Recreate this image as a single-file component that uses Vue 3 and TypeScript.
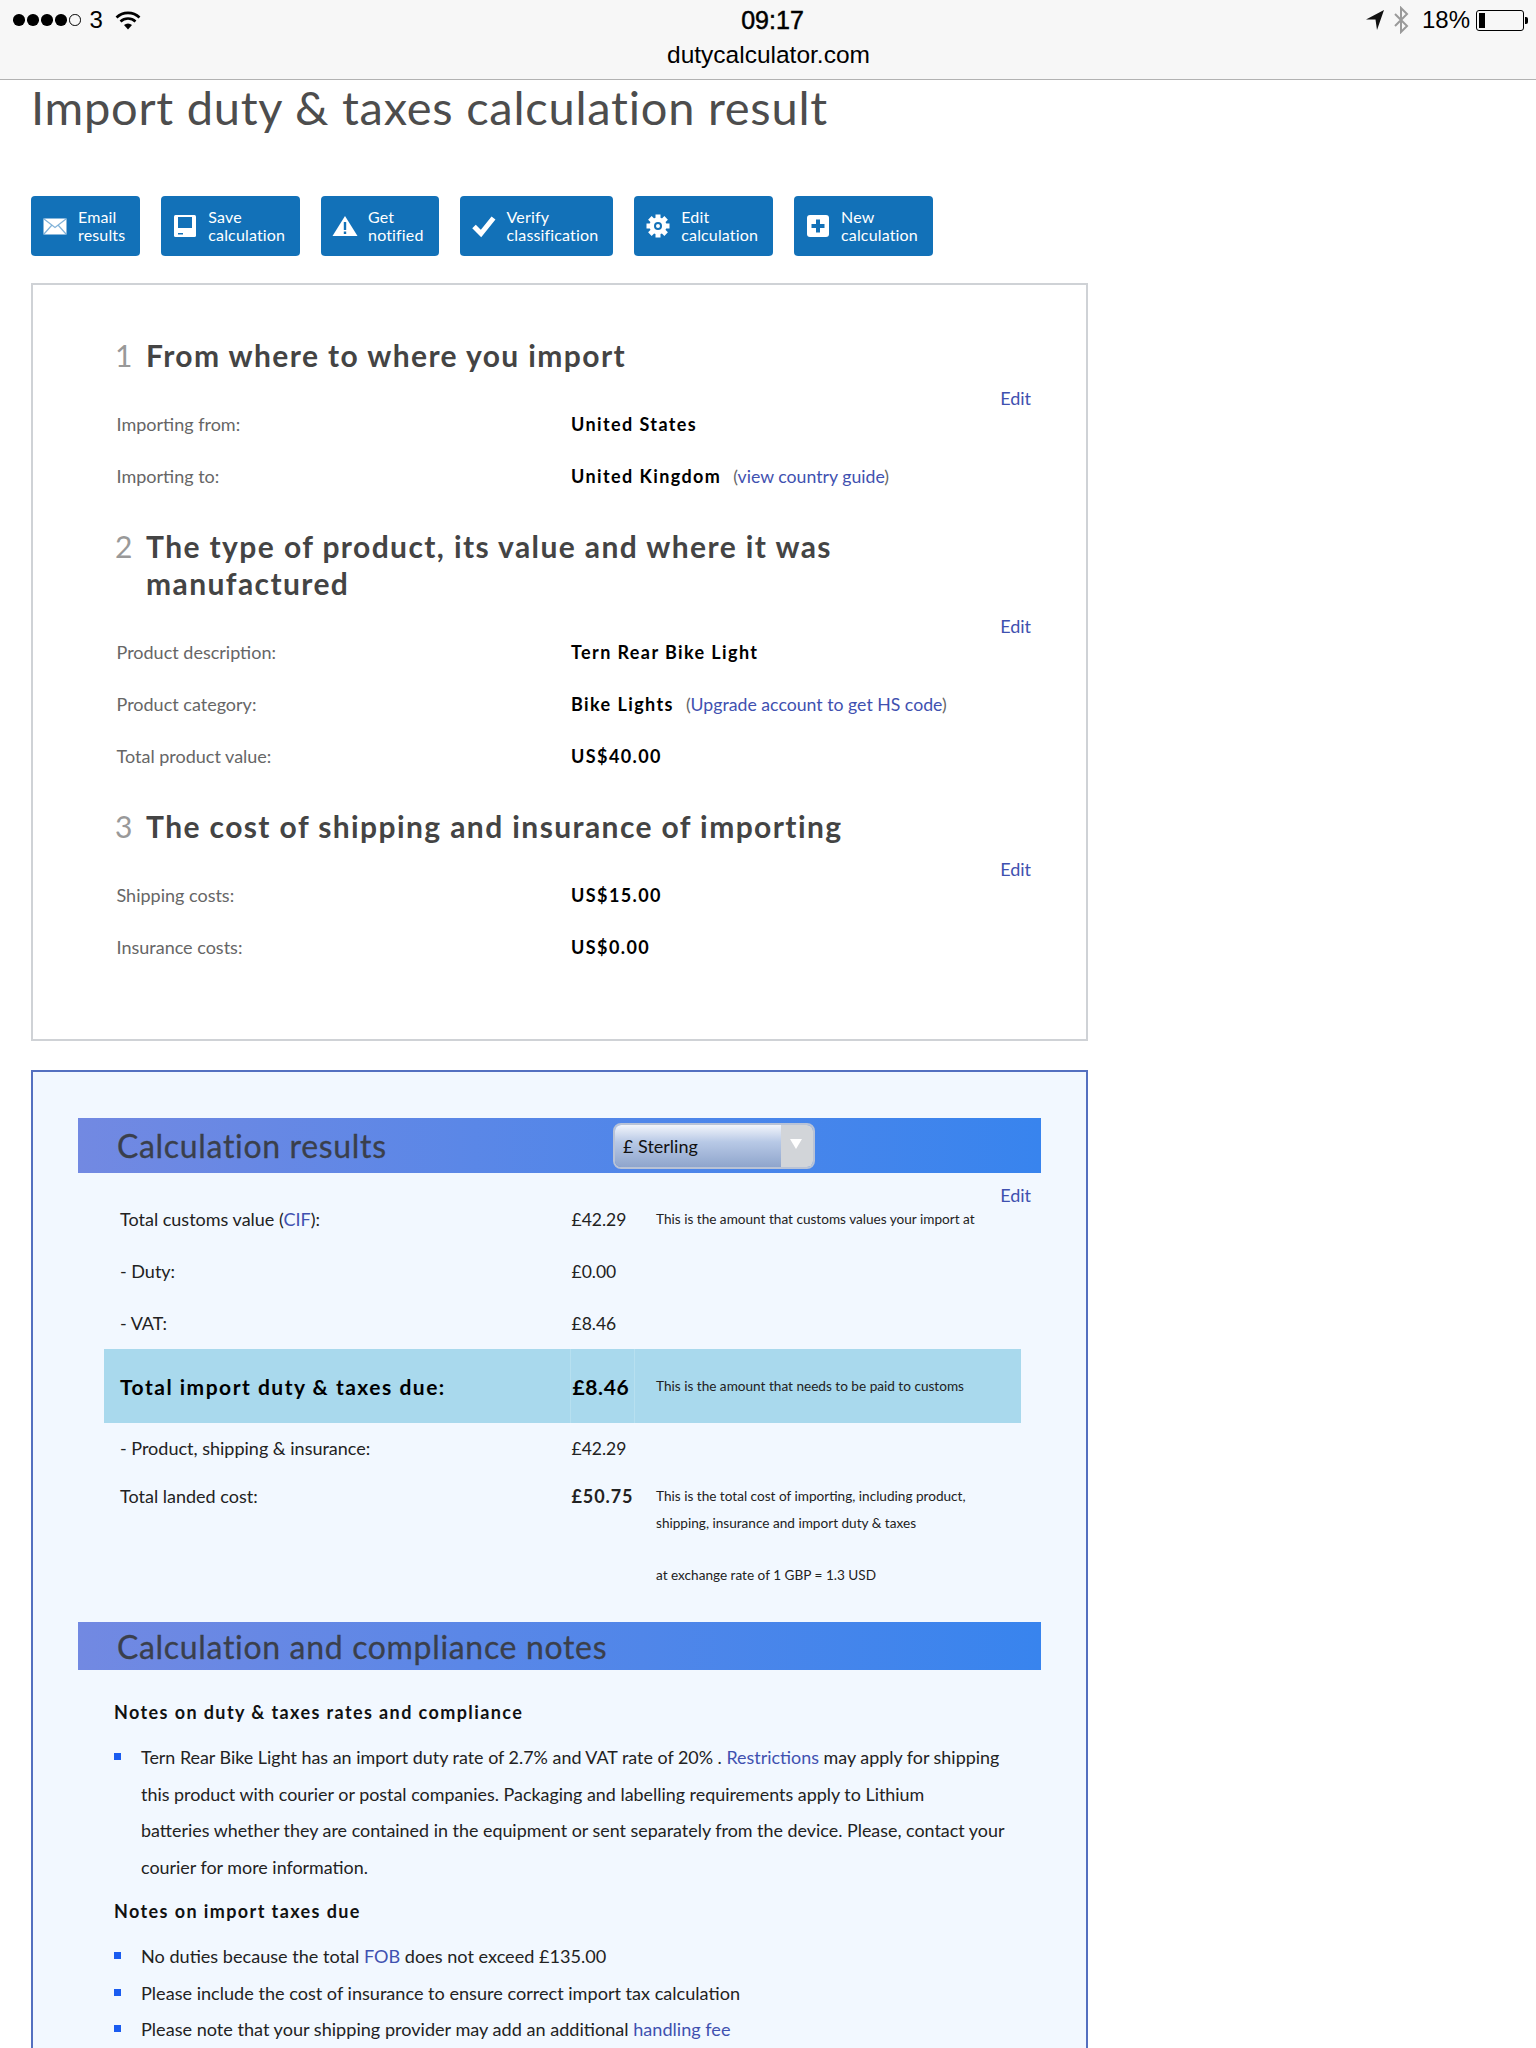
<script setup lang="ts">
type Row = { label: string; value: string; link?: string };
type Section = { num: number; title: string; rows: Row[] };

const actions = [
  { id: 'mail', top: 'Email', bottom: 'results' },
  { id: 'save', top: 'Save', bottom: 'calculation' },
  { id: 'warn', top: 'Get', bottom: 'notified' },
  { id: 'check', top: 'Verify', bottom: 'classification' },
  { id: 'gear', top: 'Edit', bottom: 'calculation' },
  { id: 'plus', top: 'New', bottom: 'calculation' },
];

const sections: Section[] = [
  {
    num: 1,
    title: 'From where to where you import',
    rows: [
      { label: 'Importing from:', value: 'United States' },
      { label: 'Importing to:', value: 'United Kingdom', link: 'view country guide' },
    ],
  },
  {
    num: 2,
    title: 'The type of product, its value and where it was manufactured',
    rows: [
      { label: 'Product description:', value: 'Tern Rear Bike Light' },
      { label: 'Product category:', value: 'Bike Lights', link: 'Upgrade account to get HS code' },
      { label: 'Total product value:', value: 'US$40.00' },
    ],
  },
  {
    num: 3,
    title: 'The cost of shipping and insurance of importing',
    rows: [
      { label: 'Shipping costs:', value: 'US$15.00' },
      { label: 'Insurance costs:', value: 'US$0.00' },
    ],
  },
];
</script>

<template>
  <div class="page">
    <header class="status">
      <div class="status-left">
        <span class="signal">
          <i v-for="n in 4" :key="n"></i>
          <i class="off"></i>
        </span>
        <span class="carrier">3</span>
        <svg width="26" height="20" viewBox="0 0 26 20" aria-hidden="true">
          <path d="M1.500 7.500a16.500 16.500 0 0 1 23 0" fill="none" stroke="#000" stroke-width="2.600" />
          <path d="M5.500 11.500a11 11 0 0 1 15 0" fill="none" stroke="#000" stroke-width="2.600" />
          <path d="M9 15a6 6 0 0 1 8 0L13 19.500z" fill="#000" />
        </svg>
      </div>
      <div class="status-center">
        <strong>09:17</strong>
        <span>dutycalculator.com</span>
      </div>
      <div class="status-right">
        <svg width="20" height="22" viewBox="0 0 20 22" aria-hidden="true">
          <path d="M19 1 L1 10.500 L10.500 10.500 L12 21z" fill="#111" />
        </svg>
        <svg width="16" height="28" viewBox="0 0 16 28" aria-hidden="true">
          <path d="M2 8l12 12-6 6V2l6 6L2 20" fill="none" stroke="#9a9a9a" stroke-width="2" />
        </svg>
        <span class="pct">18%</span>
        <span class="battery"><i></i></span>
      </div>
    </header>

    <main class="content">
      <h1>Import duty &amp; taxes calculation result</h1>

      <nav class="actions">
        <a v-for="a in actions" :key="a.id" class="action">
          <svg class="action-icon" width="26" height="26" viewBox="0 0 26 26" aria-hidden="true">
            <template v-if="a.id === 'mail'">
              <path d="M1.500 5.500h23v16h-23z" fill="#fff" />
              <path d="M2 6l11 8.500L24 6M2 21l8-9M24 21l-8-9" fill="none" stroke="#1a73b8" stroke-width="1.200" opacity=".55" />
            </template>
            <template v-else-if="a.id === 'save'">
              <path d="M3.500 2h19A1.500 1.500 0 0 1 24 3.500v19a1.500 1.500 0 0 1-1.500 1.500h-19A1.500 1.500 0 0 1 2 22.500v-19A1.500 1.500 0 0 1 3.500 2z" fill="#fff" />
              <path d="M6 4h14v11H6z" fill="#1271b8" />
              <path d="M6 20h5v1.500H6z" fill="#1271b8" />
            </template>
            <template v-else-if="a.id === 'warn'">
              <path d="M13 3L25.500 23H.500z" fill="#fff" />
              <path d="M11.800 9h2.400v8h-2.400zM11.800 18.500h2.400V21h-2.400z" fill="#1271b8" />
            </template>
            <template v-else-if="a.id === 'check'">
              <path d="M3 13.500l7 7L22.500 5" fill="none" stroke="#fff" stroke-width="5" />
            </template>
            <template v-else-if="a.id === 'gear'">
              <g fill="#fff">
                <circle cx="13" cy="13" r="8.500" />
                <rect v-for="r in [0, 45, 90, 135]" :key="r" x="10.500" y="1.500" width="5" height="23" :transform="`rotate(${r} 13 13)`" />
              </g>
              <circle cx="13" cy="13" r="4" fill="#1271b8" />
              <circle cx="13" cy="13" r="2" fill="#fff" />
            </template>
            <template v-else>
              <rect x="2" y="2" width="22" height="22" rx="3" fill="#fff" />
              <path d="M11 6.500h4V11h4.500v4H15v4.500h-4V15H6.500v-4H11z" fill="#1271b8" />
            </template>
          </svg>
          <span class="action-text">{{ a.top }}<br />{{ a.bottom }}</span>
        </a>
      </nav>

      <section class="panel summary">
        <div v-for="s in sections" :key="s.num" class="block">
          <h2><span class="num">{{ s.num }}</span><span>{{ s.title }}</span></h2>
          <a class="edit">Edit</a>
          <div v-for="r in s.rows" :key="r.label" class="row">
            <span class="row-label">{{ r.label }}</span>
            <span class="row-value">
              <b>{{ r.value }}</b>
              <span v-if="r.link" class="paren">(<a>{{ r.link }}</a>)</span>
            </span>
          </div>
        </div>
      </section>

      <section class="panel results">
        <div class="band band-top">
          <h3>Calculation results</h3>
          <div class="select">
            <span class="select-value">£ Sterling</span>
            <span class="select-arrow"></span>
          </div>
        </div>

        <a class="edit result-edit">Edit</a>

        <div class="res-row">
          <span>Total customs value (<a>CIF</a>):</span>
          <span>£42.29</span>
          <small>This is the amount that customs values your import at</small>
        </div>
        <div class="res-row"><span>- Duty:</span><span>£0.00</span></div>
        <div class="res-row"><span>- VAT:</span><span>£8.46</span></div>
        <div class="res-row total">
          <b>Total import duty &amp; taxes due:</b>
          <b>£8.46</b>
          <small>This is the amount that needs to be paid to customs</small>
        </div>
        <div class="res-row short"><span>- Product, shipping &amp; insurance:</span><span>£42.29</span></div>
        <div class="res-row landed">
          <span>Total landed cost:</span>
          <b>£50.75</b>
          <div class="landed-notes">
            <small>This is the total cost of importing, including product,<br />shipping, insurance and import duty &amp; taxes</small>
            <small class="rate">at exchange rate of 1 GBP = 1.3 USD</small>
          </div>
        </div>

        <div class="band band-notes">
          <h3>Calculation and compliance notes</h3>
        </div>

        <div class="notes">
          <h4>Notes on duty &amp; taxes rates and compliance</h4>
          <ul>
            <li>
              <span>Tern Rear Bike Light has an import duty rate of 2.7% and VAT rate of 20% . <a>Restrictions</a> may apply for shipping<br />this product with courier or postal companies. Packaging and labelling requirements apply to Lithium<br />batteries whether they are contained in the equipment or sent separately from the device. Please, contact your<br />courier for more information.</span>
            </li>
          </ul>
          <h4 class="second">Notes on import taxes due</h4>
          <ul class="taxes">
            <li><span>No duties because the total <a>FOB</a> does not exceed £135.00</span></li>
            <li><span>Please include the cost of insurance to ensure correct import tax calculation</span></li>
            <li><span>Please note that your shipping provider may add an additional <a>handling fee</a></span></li>
          </ul>
        </div>
      </section>
    </main>
  </div>
</template>

<style>
html,
body {
  margin: 0;
  background: #fff;
}
</style>

<style scoped>
.page {
  height: 2048px;
  overflow: hidden;
  font-family: Lato, 'Noto Sans', sans-serif;
  background: #fff;
}

.status {
  display: grid;
  grid-template-columns: 1fr auto 1fr;
  height: 79px;
  padding: 0 12px 0 13px;
  background: #f7f7f7;
  border-bottom: 1px solid #b2b2b2;
  font-family: 'Liberation Sans', Arial, sans-serif;
  color: #000;
}

.status-left {
  display: flex;
  align-items: center;
  align-self: start;
  gap: 12px;
  height: 40px;
  font-size: 24px;
}

.carrier {
  margin-left: -3px;
}

.signal {
  display: flex;
  gap: 2.500px;
}

.signal i {
  width: 11.500px;
  height: 11.500px;
  border-radius: 50%;
  background: #000;
  box-sizing: border-box;
}

.signal i.off {
  background: none;
  border: 1px solid #000;
}

.status-center {
  display: flex;
  flex-direction: column;
  align-items: center;
  font-size: 24.500px;
}

.status-center strong {
  margin-top: 6px;
  line-height: 29px;
  font-size: 25px;
  font-weight: 400;
  -webkit-text-stroke: 0.500px #000;
  transform: translateX(4px);
}

.status-center span {
  margin-top: 6px;
  line-height: 28px;
}

.status-right {
  display: flex;
  align-items: center;
  justify-content: flex-end;
  align-self: start;
  gap: 8px;
  height: 40px;
  font-size: 24px;
}

.pct {
  margin-left: 5px;
  margin-right: -2px;
}

.battery {
  position: relative;
  width: 42px;
  padding: 2px;
  border: 1px solid #000;
  border-radius: 3px;
  box-sizing: content-box;
  height: 15px;
}

.battery i {
  display: block;
  width: 6px;
  height: 15px;
  background: #000;
}

.battery::after {
  content: '';
  position: absolute;
  right: -5px;
  top: 6px;
  width: 3px;
  height: 7px;
  background: #000;
  border-radius: 0 2px 2px 0;
}

.content {
  padding: 0 31px;
}

h1 {
  margin: 0;
  height: 114px;
  box-sizing: border-box;
  font-size: 47px;
  line-height: 54px;
  font-weight: 400;
  letter-spacing: 0.750px;
  color: #4d4d4d;
  white-space: nowrap;
}

.actions {
  display: flex;
  gap: 21px;
  height: 60px;
  margin: 2px 0 27px;
}

.action {
  display: flex;
  align-items: center;
  gap: 10px;
  padding: 0 15px 0 11px;
  border-radius: 4px;
  background: #1271b8;
  color: #fff;
  font-size: 16px;
  line-height: 18px;
  letter-spacing: 0.150px;
}

.action-icon {
  flex: none;
}

.panel {
  width: 1057px;
  box-sizing: border-box;
  border: 2px solid #cfd2d6;
}

.summary {
  height: 758px;
  padding: 52px 55px 0 82px;
}

.block + .block {
  margin-top: 26px;
}

h2 {
  display: flex;
  margin: 0 0 12px;
  max-width: 760px;
  font-size: 30px;
  line-height: 37px;
  font-weight: 700;
  color: #444;
  letter-spacing: 1.400px;
}

.num {
  flex: none;
  width: 31px;
  color: #999;
  font-weight: 400;
  letter-spacing: 0;
}

.edit {
  display: block;
  height: 24px;
  margin-bottom: -12px;
  text-align: right;
  font-size: 18px;
  line-height: 24px;
  color: #3f51b0;
}

.row {
  display: grid;
  grid-template-columns: 454.500px 1fr;
  align-items: center;
  height: 52px;
  padding-left: 1.500px;
  font-size: 18px;
}

.row-label {
  color: #666;
}

.row-value {
  display: flex;
  gap: 12px;
  align-items: center;
  white-space: nowrap;
}

.row-value b {
  letter-spacing: 1.400px;
  color: #000;
}

.paren {
  font-size: 17.700px;
  color: #666;
}

a {
  color: #3f51b0;
}

.results {
  height: 1100px;
  margin-top: 29px;
  padding: 46px 45px 0;
  background: #f2f8ff;
  border-color: #5470c0;
}

.band {
  display: flex;
  align-items: center;
  background: linear-gradient(90deg, #7289e2, #3884ee);
}

.band-top {
  height: 55px;
}

.band-notes {
  height: 48px;
  margin-top: 33px;
}

h3 {
  margin: 0;
  padding-left: 39px;
  font-size: 32px;
  font-weight: 400;
  color: #3a3f4b;
  letter-spacing: 0.670px;
  -webkit-text-stroke: 0.300px #3a3f4b;
  white-space: nowrap;
}

.band-top h3 {
  width: 535px;
  box-sizing: border-box;
}

.select {
  display: flex;
  width: 202px;
  height: 46px;
  box-sizing: border-box;
  border: 2px solid #b9c3d6;
  border-radius: 8px;
  overflow: hidden;
}

.select-value {
  flex: 1;
  padding-left: 8px;
  font-size: 18px;
  line-height: 42px;
  color: #111;
  background: linear-gradient(#f2f5fb, #b8c9e6 40%, #8fa5cc);
}

.select-arrow {
  position: relative;
  width: 32px;
  background: #d2d5d9;
}

.select-arrow::after {
  content: '';
  position: absolute;
  left: 9px;
  top: 14px;
  border: 6px solid transparent;
  border-top: 10px solid #fff;
  border-bottom: 0;
}

.result-edit {
  margin: 10px 10px -14px 0;
}

.res-row {
  display: grid;
  grid-template-columns: 466px 65px 1fr;
  align-items: center;
  height: 52px;
  margin: 0 20px 0 26px;
  font-size: 18px;
  color: #222;
}

.res-row > :first-child {
  padding-left: 16px;
}

.res-row > :nth-child(2) {
  padding-left: 1.500px;
  font-size: 17.500px;
}

.res-row small {
  padding-left: 21px;
  font-size: 13.600px;
  color: #222;
}

.res-row.total {
  height: 74px;
  background: #a9d9ed;
  color: #000;
}

.res-row.total b {
  font-size: 21px;
  letter-spacing: 1.500px;
  white-space: nowrap;
}

.res-row.total > :nth-child(2) {
  align-self: stretch;
  display: flex;
  align-items: center;
  font-size: 21px;
  letter-spacing: 0.600px;
  border-left: 1px solid #b7e0f0;
  border-right: 1px solid #b7e0f0;
}

.res-row.short {
  height: 50px;
}

.res-row.landed {
  align-items: start;
  height: auto;
  padding-top: 10px;
  line-height: 27px;
}

.res-row.landed b {
  font-size: 18px;
  letter-spacing: 0.900px;
}

.landed-notes {
  display: flex;
  flex-direction: column;
}

.landed-notes small {
  line-height: 27px;
}

.landed-notes .rate {
  margin-top: 25px;
}

.notes {
  padding: 30px 0 0 36px;
}

h4 {
  margin: 0 0 15px;
  font-size: 18px;
  line-height: 24px;
  font-weight: 700;
  letter-spacing: 1.400px;
  color: #111;
}

h4.second {
  margin-top: 13px;
  margin-bottom: 15px;
}

ul {
  margin: 0;
  padding: 0;
  list-style: none;
}

li {
  display: flex;
  gap: 20px;
  width: 896px;
  font-size: 17.900px;
  line-height: 36.700px;
  color: #222;
  white-space: nowrap;
}

.taxes li {
  font-size: 18.100px;
}

li::before {
  content: '';
  flex: none;
  width: 7px;
  height: 7px;
  margin-top: 14px;
  background: #1a5cf0;
}
</style>
